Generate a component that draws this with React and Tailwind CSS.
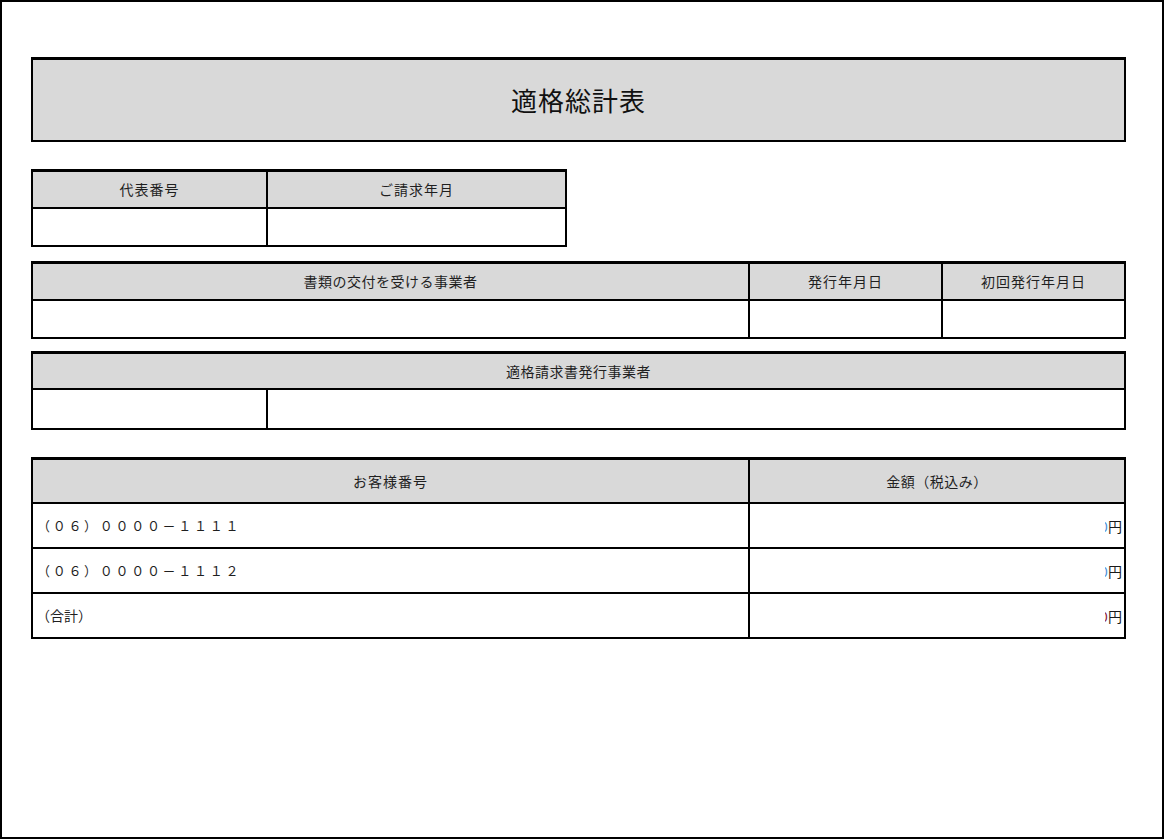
import React from "react";

const font = { fontFamily: '"Noto Sans CJK JP", "Noto Sans", sans-serif' };

function Yen({ clip = "text-[#4a90d9]" }) {
  return (
    <div className="flex h-full items-center justify-end pr-[2px]">
      <span className={`inline-block w-[3px] overflow-hidden text-[14px] leading-none ${clip}`}>
        <span className="inline-block -ml-[5px]">0</span>
      </span>
      <span className="text-[14px] leading-none text-[#1a1a1a]">円</span>
    </div>
  );
}

export default function App() {
  return (
    <div
      className="h-[839px] w-[1164px] border-2 border-black bg-white text-[#1f1f1f]"
      style={font}
    >
      <div className="ml-[29px] mt-[55px] w-[1095px]">
        {/* Title */}
        <div className="flex h-[85px] items-center justify-center border-2 border-t-[3px] border-black bg-[#d9d9d9]">
          <span className="text-[26px] leading-none tracking-[1px] text-[#111]">適格総計表</span>
        </div>

        {/* Table 1 */}
        <div className="mt-[27px] w-[536px] border-2 border-t-[3px] border-black">
          <div className="grid h-[37px] grid-cols-[233px_1fr] border-b-2 border-black bg-[#d9d9d9] text-[14px]">
            <div className="flex items-center justify-center tracking-[1px]">代表番号</div>
            <div className="flex items-center justify-center border-l-2 border-black tracking-[1px]">ご請求年月</div>
          </div>
          <div className="grid h-[36px] grid-cols-[233px_1fr]">
            <div></div>
            <div className="border-l-2 border-black"></div>
          </div>
        </div>

        {/* Table 2 */}
        <div className="mt-[14px] border-2 border-t-[3px] border-black">
          <div className="grid h-[37px] grid-cols-[715px_193px_1fr] border-b-2 border-black bg-[#d9d9d9] text-[14px]">
            <div className="flex items-center justify-center tracking-[0.5px]">書類の交付を受ける事業者</div>
            <div className="flex items-center justify-center border-l-2 border-black tracking-[1px]">発行年月日</div>
            <div className="flex items-center justify-center border-l-2 border-black tracking-[1px]">初回発行年月日</div>
          </div>
          <div className="grid h-[36px] grid-cols-[715px_193px_1fr]">
            <div></div>
            <div className="border-l-2 border-black"></div>
            <div className="border-l-2 border-black"></div>
          </div>
        </div>

        {/* Table 3 */}
        <div className="mt-[12px] border-2 border-t-[3px] border-black">
          <div className="flex h-[36px] items-center justify-center border-b-2 border-black bg-[#d9d9d9] text-[14px] tracking-[0.5px]">
            適格請求書発行事業者
          </div>
          <div className="grid h-[38px] grid-cols-[233px_1fr]">
            <div></div>
            <div className="border-l-2 border-black"></div>
          </div>
        </div>

        {/* Table 4 */}
        <div className="mt-[27px] border-2 border-t-[3px] border-black">
          <div className="grid h-[44px] grid-cols-[715px_1fr] border-b-2 border-black bg-[#d9d9d9] text-[14px]">
            <div className="flex items-center justify-center tracking-[1px]">お客様番号</div>
            <div className="flex items-center justify-center border-l-2 border-black tracking-[0.5px]">金額（税込み）</div>
          </div>
          <div className="grid h-[45px] grid-cols-[715px_1fr] border-b-2 border-black">
            <div className="flex items-center pl-[4px] text-[13px] tracking-[2.7px]">（０６）００００－１１１１</div>
            <div className="border-l-2 border-black">
              <Yen />
            </div>
          </div>
          <div className="grid h-[45px] grid-cols-[715px_1fr] border-b-2 border-black">
            <div className="flex items-center pl-[4px] text-[13px] tracking-[2.7px]">（０６）００００－１１１２</div>
            <div className="border-l-2 border-black">
              <Yen />
            </div>
          </div>
          <div className="grid h-[43px] grid-cols-[715px_1fr]">
            <div className="flex items-center pl-[3px] text-[14px]">（合計）</div>
            <div className="border-l-2 border-black">
              <Yen clip="text-[#8b1a3a]" />
            </div>
          </div>
        </div>
      </div>
    </div>
  );
}
